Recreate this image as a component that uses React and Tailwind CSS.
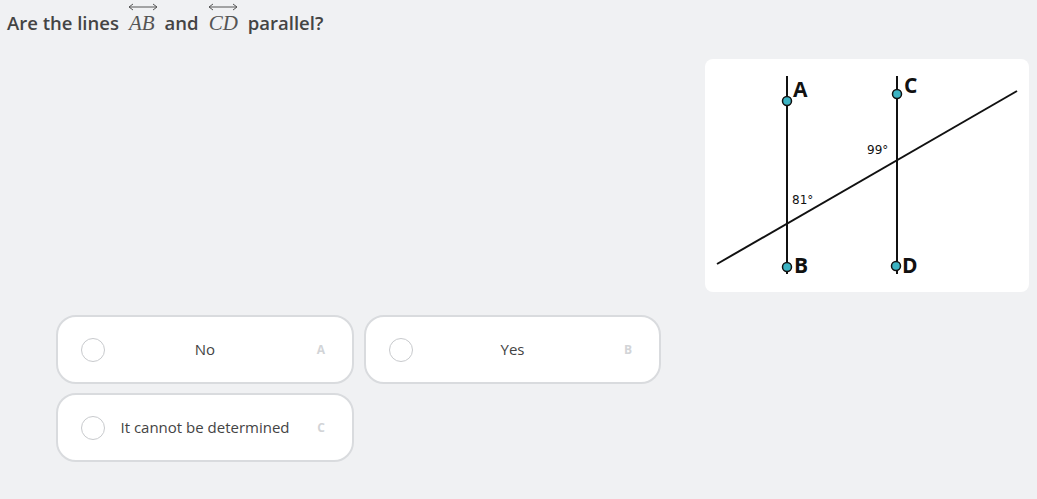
import React from "react";

const options = [
  { text: "No", letter: "A" },
  { text: "Yes", letter: "B" },
  { text: "It cannot be determined", letter: "C" },
];

function Overline({ children }) {
  return (
    <span className="relative inline-block px-[1px]">
      <svg className="absolute left-0 right-0 -top-[8px] mx-auto" width="30" height="8" viewBox="0 0 30 8">
        <path d="M1 4 H29 M1 4 L5 1 M1 4 L5 7 M29 4 L25 1 M29 4 L25 7" stroke="#555" strokeWidth="1" fill="none" />
      </svg>
      <span className="font-['Liberation_Serif',serif] italic font-normal text-[21px] text-[#555]">{children}</span>
    </span>
  );
}

function Diagram() {
  const dot = "#3bb3c3";
  return (
    <svg width="324" height="233" viewBox="0 0 324 233">
      <line x1="82" y1="17" x2="82" y2="215" stroke="#111" strokeWidth="2" />
      <line x1="192" y1="17" x2="192" y2="215" stroke="#111" strokeWidth="2" />
      <line x1="12" y1="205" x2="312" y2="32" stroke="#111" strokeWidth="2" />
      <circle cx="82" cy="42" r="4.5" fill={dot} stroke="#111" strokeWidth="1.5" />
      <circle cx="82" cy="208" r="4.5" fill={dot} stroke="#111" strokeWidth="1.5" />
      <circle cx="192" cy="35" r="4.5" fill={dot} stroke="#111" strokeWidth="1.5" />
      <circle cx="191" cy="207" r="4.5" fill={dot} stroke="#111" strokeWidth="1.5" />
      <g fontFamily="Open Sans, Arial, sans-serif" fontWeight="bold" fontSize="21" fill="#111">
        <text x="88" y="38">A</text>
        <text x="89" y="214">B</text>
        <text x="199" y="34">C</text>
        <text x="197" y="214">D</text>
      </g>
      <g fontFamily="DejaVu Sans, sans-serif" fontSize="12" fill="#111">
        <text x="87" y="145">81°</text>
        <text x="162" y="95">99°</text>
      </g>
    </svg>
  );
}

export default function App() {
  return (
    <div className="w-[1037px] h-[499px] bg-[#f0f1f3] font-['Open_Sans',sans-serif] overflow-hidden">
      <h1 className="pl-[7px] pt-[11px] text-[18.5px] font-semibold text-[#444] flex items-center gap-[9px] leading-[24px]">
        <span>Are the lines</span>
        <Overline>AB</Overline>
        <span>and</span>
        <Overline>CD</Overline>
        <span>parallel?</span>
      </h1>
      <div className="flex justify-end pr-[8px] mt-[24px]">
        <div className="bg-white rounded-[8px] w-[324px] h-[233px]">
          <Diagram />
        </div>
      </div>
      <div className="grid grid-cols-[298px_297px] gap-x-[10px] gap-y-[9px] pl-[56px] mt-[23px]">
        {options.map((o) => (
          <div
            key={o.letter}
            className="h-[69px] bg-white border-2 border-[#d9dbde] rounded-[20px] grid grid-cols-[36px_1fr_36px] items-center px-[23px]"
          >
            <span className="w-[24px] h-[24px] rounded-full border border-[#c8cacd]" />
            <span className="text-center text-[15px] text-[#444] whitespace-nowrap">{o.text}</span>
            <span className="justify-self-end mr-[4px] text-[12px] font-bold text-[#d2d4d7]">{o.letter}</span>
          </div>
        ))}
      </div>
    </div>
  );
}
